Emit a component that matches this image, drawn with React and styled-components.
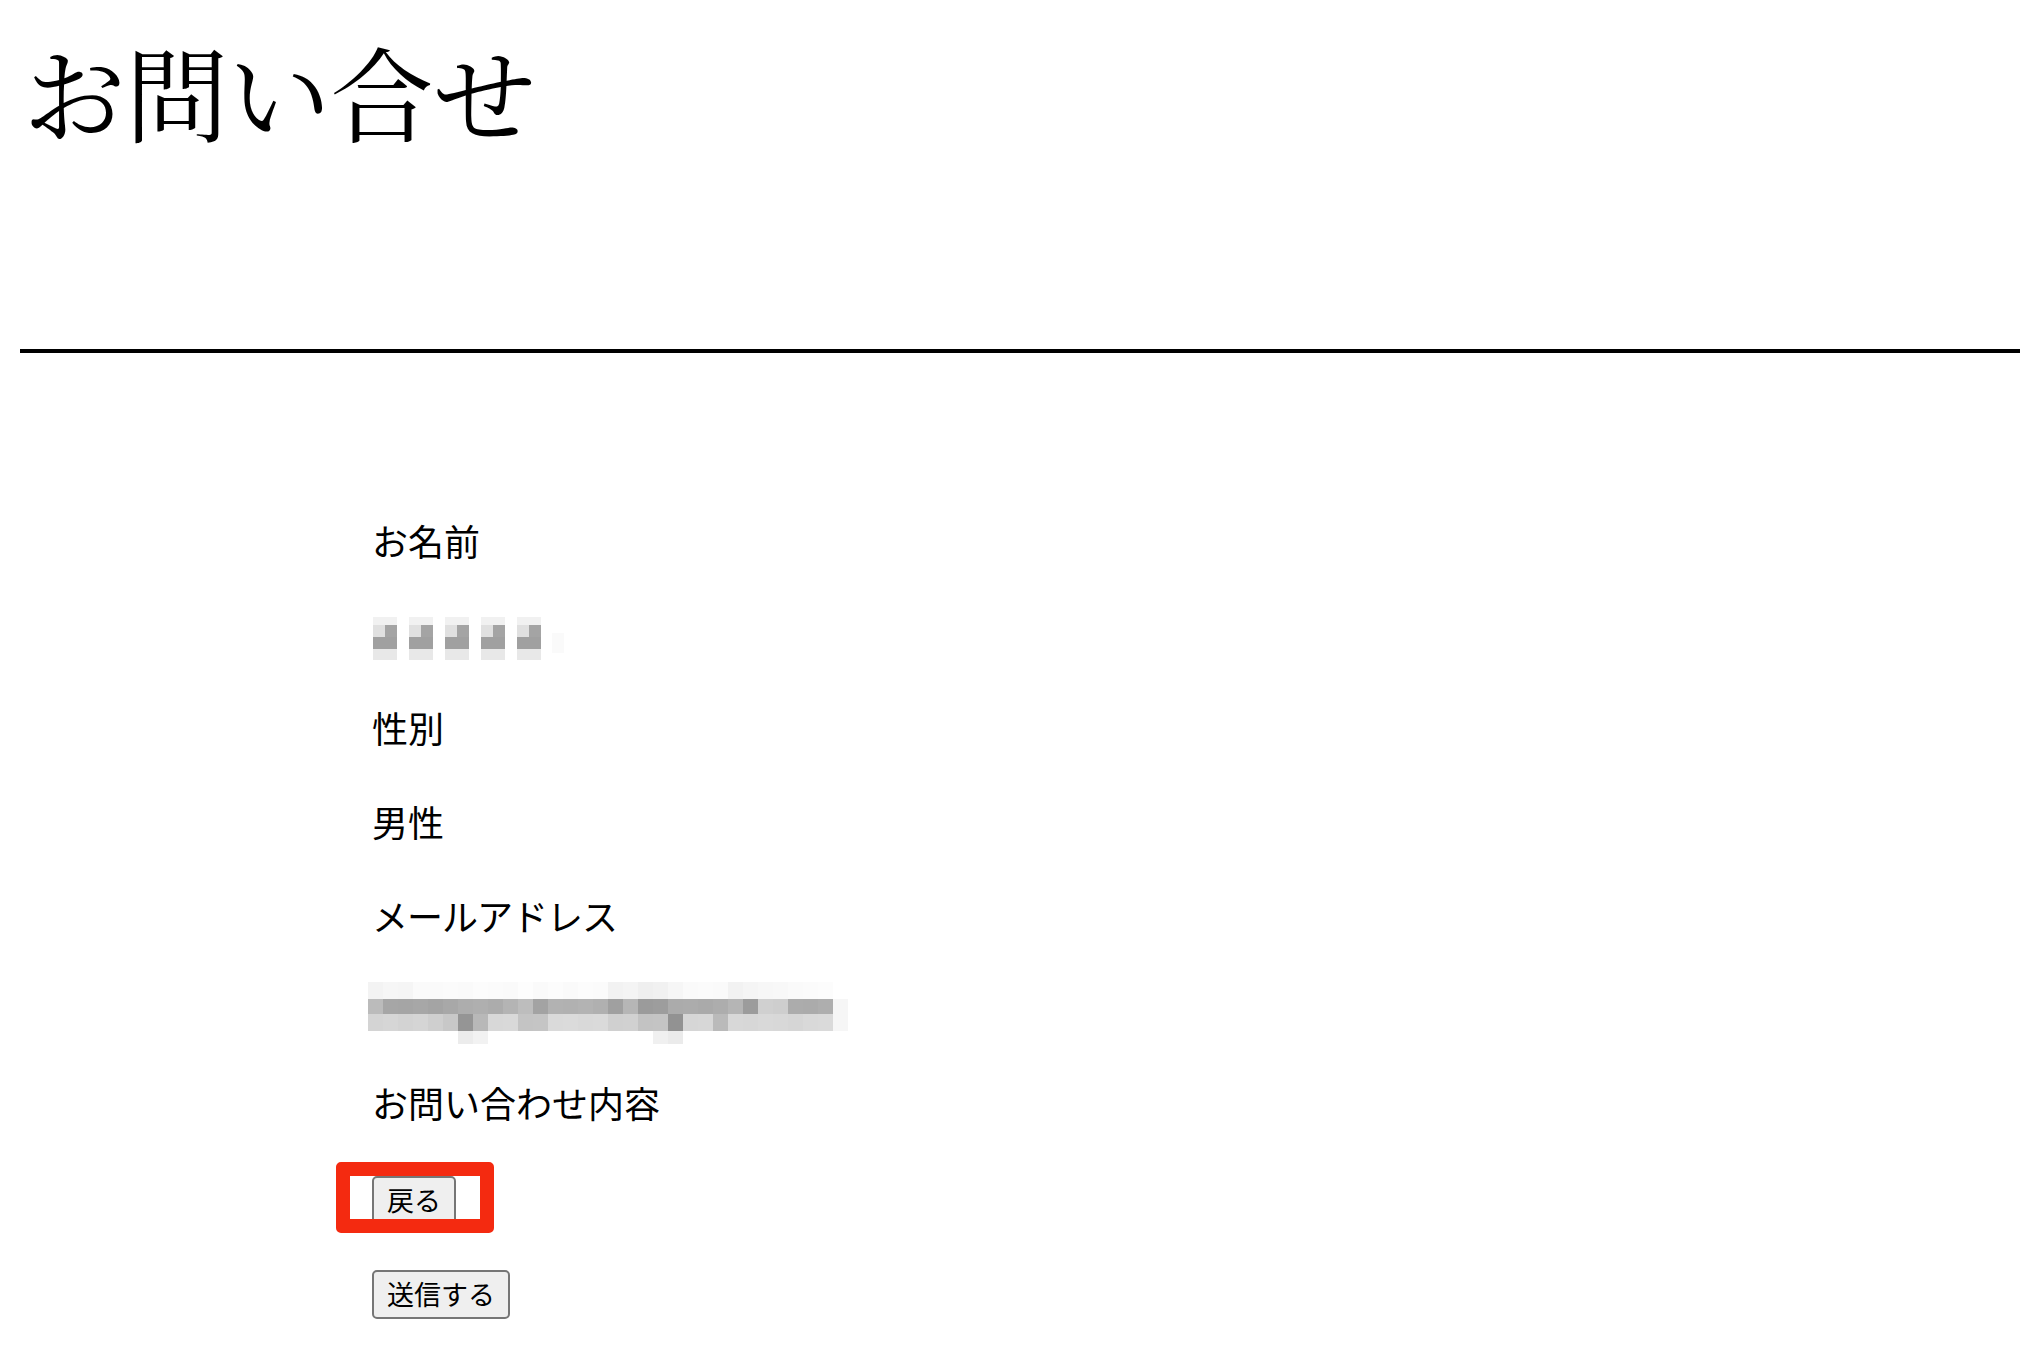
import React from 'react'
import styled, { createGlobalStyle } from 'styled-components'

const GlobalStyle = createGlobalStyle`
    html, body {
        margin: 0;
        padding: 0;
        background: #fff;
        color: #000;
    }
    body {
        font-family: "Noto Sans CJK JP", "Noto Sans", sans-serif;
    }
`

const nameCells = [0, 1, 2, 3, 4]

const mailTop = ['#f3f3f3', '#f6f6f6', '#f5f5f5', '#fafafa', '#fafafa', '#fbfbfb', '#fafafa', '#fcfcfc', '#fbfbfb', '#fafafa', '#fdfdfd', '#fafafa', '#fcfcfc', '#fafafa', '#fcfcfc', '#fbfbfb', '#f2f2f2', '#f4f4f4', '#efefef', '#f1f1f1', '#f6f6f6', '#fafafa', '#fbfbfb', '#fafafa', '#f2f2f2', '#f5f5f5', '#f7f7f7', '#f8f8f8', '#fafafa', '#fbfbfb', '#fcfcfc']
const mailRow1 = ['#bbbbbb', '#a6a6a6', '#a5a5a5', '#a7a7a7', '#a4a4a4', '#a8a8a8', '#adadad', '#afafaf', '#acacac', '#b4b4b4', '#bdbdbd', '#a3a3a3', '#b2b2b2', '#b1b1b1', '#b3b3b3', '#b0b0b0', '#a0a0a0', '#b6b6b6', '#9b9b9b', '#9d9d9d', '#ababab', '#acacac', '#aaaaaa', '#adadad', '#b5b5b5', '#9c9c9c', '#d0d0d0', '#cecece', '#acacac', '#ababab', '#aeaeae']
const mailRow2 = ['#d4d4d4', '#d6d6d6', '#d3d3d3', '#d5d5d5', '#cfcfcf', '#c8c8c8', '#959595', '#b8b8b8', '#d8d8d8', '#d9d9d9', '#c4c4c4', '#c5c5c5', '#dadada', '#dbdbdb', '#d9d9d9', '#dadada', '#d0d0d0', '#d1d1d1', '#c3c3c3', '#c4c4c4', '#929292', '#d6d6d6', '#d7d7d7', '#bababa', '#d8d8d8', '#d7d7d7', '#d9d9d9', '#d8d8d8', '#d6d6d6', '#d9d9d9', '#dadada']
const mailBottom = { 6: '#ececec', 7: '#f2f2f2', 19: '#f0f0f0', 20: '#ebebeb' }

const NameMosaic = () => (
    <MosaicSvg width="200" height="58" viewBox="0 0 200 58">
        {nameCells.map((i) => {
            const x = 1 + i * 36
            return (
                <g key={i}>
                    <rect x={x} y="12" width="24" height="8" fill="#f1f1f1" />
                    <rect x={x} y="20" width="12" height="12" fill="#e0e0e0" />
                    <rect x={x + 12} y="20" width="12" height="12" fill="#a4a4a4" />
                    <rect x={x} y="32" width="24" height="12" fill="#a0a0a0" />
                    <rect x={x} y="44" width="24" height="11" fill="#e8e8e8" />
                </g>
            )
        })}
        <rect x="180" y="28" width="12" height="20" fill="#fafafa" />
    </MosaicSvg>
)

const MailMosaic = () => (
    <MosaicSvg width="500" height="72" viewBox="0 0 500 72">
        {mailRow1.map((c, i) => (
            <g key={i}>
                <rect x={-4 + i * 15} y="3" width="15" height="17" fill={mailTop[i]} />
                <rect x={-4 + i * 15} y="20" width="15" height="15" fill={c} />
                <rect x={-4 + i * 15} y="35" width="15" height="17" fill={mailRow2[i]} />
                {mailBottom[i] && <rect x={-4 + i * 15} y="52" width="15" height="13" fill={mailBottom[i]} />}
            </g>
        ))}
        <rect x="461" y="20" width="15" height="32" fill="#f6f6f6" />
    </MosaicSvg>
)

const fields = [
    { type: 'label', text: 'お名前' },
    { type: 'mosaic', node: <NameMosaic /> },
    { type: 'label', text: '性別' },
    { type: 'label', text: '男性' },
    { type: 'label', text: 'メールアドレス', tight: true },
    { type: 'mosaic', node: <MailMosaic /> },
    { type: 'label', text: 'お問い合わせ内容' },
]

const App = () => {
    return (
        <>
            <GlobalStyle />
            <Page>
                <Header>
                    <Title>お問い合せ</Title>
                </Header>
                <Divider />
                <Form>
                    {fields.map((f, i) =>
                        f.type === 'label'
                            ? <Row key={i} $tight={f.tight}>{f.text}</Row>
                            : <Row key={i}>{f.node}</Row>
                    )}
                    <ButtonRow>
                        <Highlight>
                            <Button type="button">戻る</Button>
                            <Marker />
                        </Highlight>
                    </ButtonRow>
                    <ButtonRow>
                        <Button type="submit">送信する</Button>
                    </ButtonRow>
                </Form>
            </Page>
        </>
    )
}

export default App

const Page = styled.div`
    padding: 0 18px 60px 20px;
    min-height: 1370px;
    box-sizing: border-box;
`

const Header = styled.header`
    padding: 38px 0 0 3px;
    height: 349px;
    box-sizing: border-box;
`

const Title = styled.h1`
    margin: 0;
    font-family: "Noto Serif CJK JP", "Noto Sans CJK JP", serif;
    font-weight: 400;
    font-size: 103px;
    line-height: 104px;
    letter-spacing: -0.5px;
`

const Divider = styled.hr`
    margin: 0;
    border: none;
    height: 4px;
    background: #000;
`

const Form = styled.div`
    display: flex;
    flex-direction: column;
    align-items: flex-start;
    gap: 35.7px;
    margin: 158px 0 0 352px;
`

const Row = styled.div`
    height: 58px;
    font-size: 36px;
    line-height: 58px;
    white-space: nowrap;
    letter-spacing: ${(p) => (p.$tight ? '-1px' : '0')};
`

const MosaicSvg = styled.svg`
    display: block;
    overflow: visible;
`

const ButtonRow = styled.div`
    padding-top: 9px;
    display: flex;
`

const Highlight = styled.div`
    position: relative;
    display: inline-flex;
`

const Marker = styled.span`
    position: absolute;
    left: -36px;
    top: -14px;
    width: 158px;
    height: 71px;
    box-sizing: border-box;
    border: 14px solid #f42a10;
    border-radius: 5px;
    pointer-events: none;
`

const Button = styled.button`
    font-family: "Noto Sans CJK JP", sans-serif;
    font-size: 27px;
    line-height: 38px;
    padding: 3px 13px 4px;
    color: #000;
    background: #efefef;
    border: 2px solid #767676;
    border-radius: 5px;
`
